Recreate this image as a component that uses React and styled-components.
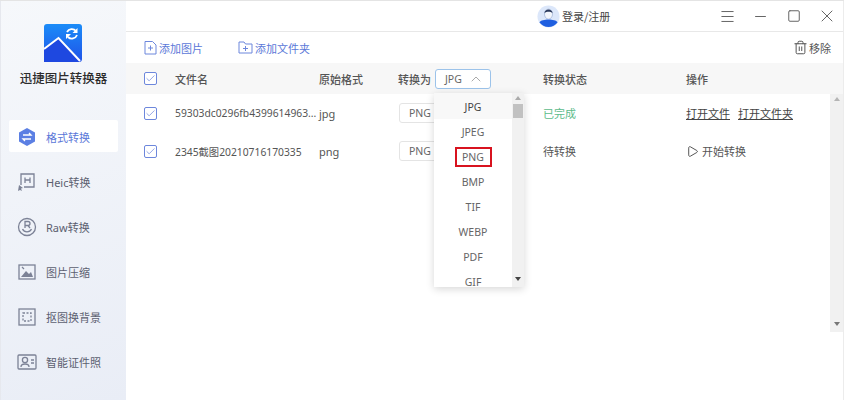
import React from 'react';
import styled, { createGlobalStyle } from 'styled-components';
import { Minus, Square, X, Menu, Play, Trash2, ChevronUp, Check } from 'lucide-react';

const GlobalStyle = createGlobalStyle`
  html, body { margin: 0; padding: 0; background: #fff; }
  body { font-family: "Noto Sans CJK SC", "Noto Sans", sans-serif; color: #555; overflow: hidden; }
  * { box-sizing: border-box; }
`;

const Window = styled.div`
  display: flex;
  width: 844px;
  height: 400px;
  overflow: hidden;
  background: #fff;
  border-top: 1px solid #e4e4e4;
`;

const Sidebar = styled.aside`
  width: 126px;
  flex: none;
  display: flex;
  flex-direction: column;
  align-items: center;
  background: linear-gradient(160deg, #f6f8fb 0%, #e9edf6 100%);
  border-left: 1px solid #e6e8ee;
`;

const Logo = styled.svg`
  margin: 23px 0 0 -1px;
  display: block;
`;

const AppName = styled.div`
  margin-top: 7px;
  font-size: 12.5px;
  line-height: 18px;
  font-weight: 500;
  color: #2c2c2c;
  white-space: nowrap;
`;

const Nav = styled.nav`
  margin-top: 33px;
  width: 100%;
  display: flex;
  flex-direction: column;
  gap: 13.2px;
  padding-left: 8px;
`;

const NavItem = styled.div`
  width: 109px;
  height: 32px;
  flex: none;
  display: flex;
  align-items: center;
  gap: 9px;
  padding: 1px 0 0 8px;
  font-size: 11px;
  white-space: nowrap;
  border-radius: 2px;
  color: ${p => (p.$active ? '#5b78d8' : '#5c6070')};
  background: ${p => (p.$active ? '#fff' : 'transparent')};
  font-family: "Noto Sans", "Noto Sans CJK SC", sans-serif;
`;

const NavIcon = styled.svg`
  width: 20px;
  height: 20px;
  flex: none;
`;

const Main = styled.main`
  flex: 1;
  min-width: 0;
  display: flex;
  flex-direction: column;
  position: relative;
  border-right: 1px solid #ececec;
`;

const TitleBar = styled.header`
  height: 31px;
  flex: none;
  display: flex;
  align-items: center;
  border-bottom: 1px solid #e8e8e8;
  padding-left: 411px;
`;

const Login = styled.div`
  display: flex;
  align-items: center;
  gap: 2px;
  width: 174px;
  font-size: 11px;
  color: #444;
`;

const WinButtons = styled.div`
  display: flex;
  align-items: center;
  color: #666;
`;

const WinButton = styled.span`
  width: 33px;
  display: flex;
  justify-content: center;
`;

const Toolbar = styled.div`
  height: 31px;
  flex: none;
  display: flex;
  align-items: center;
  padding: 0 12px 0 18px;
  font-size: 11px;
  color: #5b78d8;
`;

const ToolButton = styled.div`
  display: flex;
  align-items: center;
  gap: 2px;
  margin-right: ${p => p.$gap || 0}px;
  white-space: nowrap;
`;

const RemoveButton = styled.div`
  margin-left: auto;
  display: flex;
  align-items: center;
  gap: 1px;
  color: #555;
  font-size: 11px;
`;

const Row = styled.div`
  display: grid;
  grid-template-columns: 31px 144px 79px 145px 143px 1fr;
  align-items: center;
  padding-left: 18px;
  height: ${p => (p.$head ? 31 : 38)}px;
  background: ${p => (p.$head ? '#f7f7f7' : 'transparent')};
  font-size: 11px;
  color: #555;
  font-family: "Noto Sans", "Noto Sans CJK SC", sans-serif;
`;

const HeadCell = styled.div`
  font-weight: 500;
  color: #555;
  white-space: nowrap;
`;

const Cell = styled.div`
  white-space: nowrap;
  color: ${p => p.$color || '#555'};
`;

const FileName = styled(Cell)`
  font-size: 10.3px;
`;

const Box = styled.span`
  width: 13px;
  height: 13px;
  display: flex;
  align-items: center;
  justify-content: center;
  border: 1px solid #6d87dc;
  border-radius: 2px;
  color: #6d87dc;
  background: #fff;
`;

const FormatCell = styled.div`
  display: flex;
  align-items: center;
  gap: 4px;
`;

const FormatSelect = styled.div`
  width: 56px;
  height: 20px;
  display: flex;
  align-items: center;
  justify-content: ${p => (p.$open ? 'space-between' : 'flex-start')};
  padding: ${p => (p.$open ? '0 6px 0 9px' : '0 9px')};
  margin-left: ${p => (p.$open ? 0 : 1)}px;
  border: 1px solid ${p => (p.$open ? '#9cc3ea' : '#e4e4e4')};
  border-radius: 3px;
  background: #fff;
  font-size: 10.5px;
  color: #666;
  font-family: "Noto Sans", sans-serif;
`;

const LinkText = styled.span`
  text-decoration: underline;
  color: #444;
  margin-right: 8px;
`;

const StartAction = styled.div`
  display: flex;
  align-items: center;
  gap: 3px;
  white-space: nowrap;
`;

const Dropdown = styled.div`
  position: absolute;
  left: 308px;
  top: 92px;
  width: 90px;
  height: 194px;
  background: #fff;
  box-shadow: 0 2px 8px rgba(0, 0, 0, 0.16);
  display: flex;
  overflow: hidden;
  z-index: 2;
`;

const Options = styled.div`
  width: 78px;
  display: flex;
  flex-direction: column;
  align-items: center;
`;

const Option = styled.div`
  width: 100%;
  flex: none;
  height: ${p => (p.$active ? 26 : 25)}px;
  padding-top: ${p => (p.$active ? 2 : 0)}px;
  display: flex;
  align-items: center;
  justify-content: center;
  font-size: 10.5px;
  color: ${p => (p.$active ? '#444' : '#666')};
  background: ${p => (p.$active ? '#f8f8f8' : 'transparent')};
  font-family: "Noto Sans", sans-serif;
`;

const Highlight = styled.span`
  width: 37px;
  height: 20px;
  display: flex;
  align-items: center;
  justify-content: center;
  border: 2px solid #d8131f;
`;

const ScrollTrack = styled.div`
  position: relative;
  width: 12px;
  background: #f1f1f1;
  flex: none;
`;

const ThumbSmall = styled.div`
  position: absolute;
  top: 11px;
  left: 1px;
  right: 1px;
  height: 14px;
  background: #c1c1c1;
`;

const ArrowUp = styled.div`
  position: absolute;
  top: 3px;
  left: 50%;
  margin-left: -3px;
  border-left: 3px solid transparent;
  border-right: 3px solid transparent;
  border-bottom: 4px solid ${p => p.$color};
`;

const ArrowDown = styled.div`
  position: absolute;
  bottom: 6px;
  left: 50%;
  margin-left: -3px;
  border-left: 3px solid transparent;
  border-right: 3px solid transparent;
  border-top: 4px solid ${p => p.$color};
`;

const PageScroll = styled.div`
  position: absolute;
  right: 0;
  top: 93px;
  width: 13px;
  height: 238px;
  background: #f1f1f1;
`;

const Sheet = styled.div`
  position: relative;
  flex: 1;
`;

const stroke = { fill: 'none', stroke: '#7c8296', strokeWidth: 1.3 };

const navItems = [
  {
    label: '格式转换',
    active: true,
    icon: (
      <>
        <path d="M10 1 L18 5.5 V14.5 L10 19 L2 14.5 V5.5 Z" fill="#5b7fe3" />
        <path d="M6 8 H14 L12 6 M14 12 H6 L8 14" fill="none" stroke="#fff" strokeWidth="1.3" />
      </>
    ),
  },
  {
    label: 'Heic转换',
    icon: (
      <>
        <path d="M4 13 V2 H17 V15 H7" {...stroke} />
        <path d="M8 5.5 V11 M13 5.5 V11 M8 8 H13" {...stroke} />
        <path d="M2 13 L6 16 L4 16.5 L5 19 L3 18 L1 19 Z" fill="#7c8296" />
      </>
    ),
  },
  {
    label: 'Raw转换',
    icon: (
      <>
        <circle cx="10" cy="10" r="8.5" {...stroke} />
        <path d="M8 11 V4.5 H11 A2 2 0 0 1 11 8.5 H8 M11 8.5 L13 11 M5.5 12 A5 5 0 0 0 14.5 12" {...stroke} />
      </>
    ),
  },
  {
    label: '图片压缩',
    icon: (
      <>
        <rect x="2" y="3" width="16" height="14" {...stroke} />
        <path d="M4 15 L9 9 L12 12 L14 10 L16 15 Z" fill="#7c8296" />
        <path d="M5 5 L7 7" {...stroke} />
      </>
    ),
  },
  {
    label: '抠图换背景',
    icon: (
      <>
        <rect x="2" y="2" width="16" height="16" {...stroke} />
        <rect x="6" y="6" width="8" height="8" fill="none" stroke="#7c8296" strokeWidth="1.3" strokeDasharray="2 1.5" />
      </>
    ),
  },
  {
    label: '智能证件照',
    icon: (
      <>
        <rect x="1" y="3" width="18" height="14" rx="1" {...stroke} />
        <circle cx="8" cy="8" r="2.6" {...stroke} />
        <path d="M4 15 C4 11 12 11 12 15 M14 8 H17 M14 11 H17" {...stroke} />
      </>
    ),
  },
];

const formats = ['JPG', 'JPEG', 'PNG', 'BMP', 'TIF', 'WEBP', 'PDF', 'GIF'];

const CheckBox = () => (
  <Box>
    <Check size={11} strokeWidth={1.6} />
  </Box>
);

const App = () => (
  <>
    <GlobalStyle />
    <Window>
      <Sidebar>
        <Logo width="38" height="38" viewBox="0 0 38 38">
          <defs>
            <linearGradient id="logoBg" x1="0" y1="0" x2="0" y2="1">
              <stop offset="0" stopColor="#1b8cf8" />
              <stop offset="1" stopColor="#1f52e8" />
            </linearGradient>
          </defs>
          <rect width="38" height="38" rx="3" fill="url(#logoBg)" />
          <path d="M0 25 L14.500 14 L36 38 H0 Z" fill="#1e48e0" />
          <path d="M0 25 L14.500 14 L36 37" fill="none" stroke="#fff" strokeWidth="2" />
          <path d="M23 8 A5.500 5.500 0 0 1 32 7 M33 11 A5.500 5.500 0 0 1 24 13" fill="none" stroke="#fff" strokeWidth="1.800" />
          <path d="M33.500 4 V9 H28.500 Z M22 15 V10 H27 Z" fill="#fff" />
        </Logo>
        <AppName>迅捷图片转换器</AppName>
        <Nav>
          {navItems.map(item => (
            <NavItem key={item.label} $active={item.active}>
              <NavIcon viewBox="0 0 20 20">{item.icon}</NavIcon>
              {item.label}
            </NavItem>
          ))}
        </Nav>
      </Sidebar>
      <Main>
        <TitleBar>
          <Login>
            <svg width="23" height="23" viewBox="0 0 24 24">
              <circle cx="12" cy="12" r="11.500" fill="#dce7fa" />
              <path d="M2.500 18 C5 14 19 14 21.500 18 A11.500 11.500 0 0 1 2.500 18 Z" fill="#1f5fe0" />
              <ellipse cx="12" cy="9.500" rx="4.200" ry="5.200" fill="#f3f6fc" stroke="#8ea4cc" strokeWidth="0.600" />
              <path d="M7.800 8.500 C8 3.500 16 3.500 16.200 8.500 C14 6.500 10 6.500 7.800 8.500 Z" fill="#2b3a5c" />
            </svg>
            登录/注册
          </Login>
          <WinButtons>
            <WinButton><Menu size={17} strokeWidth={1} absoluteStrokeWidth /></WinButton>
            <WinButton><Minus size={17} strokeWidth={1} absoluteStrokeWidth /></WinButton>
            <WinButton><Square size={14} strokeWidth={1} absoluteStrokeWidth /></WinButton>
            <WinButton><X size={20} strokeWidth={1} absoluteStrokeWidth /></WinButton>
          </WinButtons>
        </TitleBar>
        <Toolbar>
          <ToolButton $gap={35}>
            <svg width="13" height="15" viewBox="0 0 13 15" fill="none" stroke="#6d87dc">
              <path d="M1 1.500 H8.500 L12 5 V14 H1 Z M4 8 H9 M6.500 5.500 V10.500" />
            </svg>
            添加图片
          </ToolButton>
          <ToolButton>
            <svg width="15" height="13" viewBox="0 0 15 13" fill="none" stroke="#6d87dc">
              <path d="M1 1 H6 L7.500 3 H14 V12 H1 Z M5 7.500 H10 M7.500 5 V10" />
            </svg>
            添加文件夹
          </ToolButton>
          <RemoveButton>
            <Trash2 size={15} strokeWidth={1} absoluteStrokeWidth />
            移除
          </RemoveButton>
        </Toolbar>
        <Row $head>
          <CheckBox />
          <HeadCell>文件名</HeadCell>
          <HeadCell>原始格式</HeadCell>
          <FormatCell>
            <HeadCell>转换为</HeadCell>
            <FormatSelect $open>
              JPG
              <ChevronUp size={16} strokeWidth={1} absoluteStrokeWidth color="#aaa" />
            </FormatSelect>
          </FormatCell>
          <HeadCell>转换状态</HeadCell>
          <HeadCell>操作</HeadCell>
        </Row>
        <Sheet>
          <Row>
            <CheckBox />
            <FileName>59303dc0296fb4399614963...</FileName>
            <Cell>jpg</Cell>
            <FormatCell>
              <FormatSelect>PNG</FormatSelect>
            </FormatCell>
            <Cell $color="#5dbb8b">已完成</Cell>
            <Cell>
              <LinkText>打开文件</LinkText>
              <LinkText>打开文件夹</LinkText>
            </Cell>
          </Row>
          <Row>
            <CheckBox />
            <FileName>2345截图20210716170335</FileName>
            <Cell>png</Cell>
            <FormatCell>
              <FormatSelect>PNG</FormatSelect>
            </FormatCell>
            <Cell>待转换</Cell>
            <StartAction>
              <Play size={13} strokeWidth={1} absoluteStrokeWidth />
              开始转换
            </StartAction>
          </Row>
        </Sheet>
        <PageScroll>
          <ArrowUp $color="#b5b5b5" />
          <ArrowDown $color="#777" />
        </PageScroll>
        <Dropdown>
          <Options>
            {formats.map(f => (
              <Option key={f} $active={f === 'JPG'}>
                {f === 'PNG' ? <Highlight>{f}</Highlight> : f}
              </Option>
            ))}
          </Options>
          <ScrollTrack>
            <ArrowUp $color="#aaa" />
            <ThumbSmall />
            <ArrowDown $color="#444" />
          </ScrollTrack>
        </Dropdown>
      </Main>
    </Window>
  </>
);

export default App;
